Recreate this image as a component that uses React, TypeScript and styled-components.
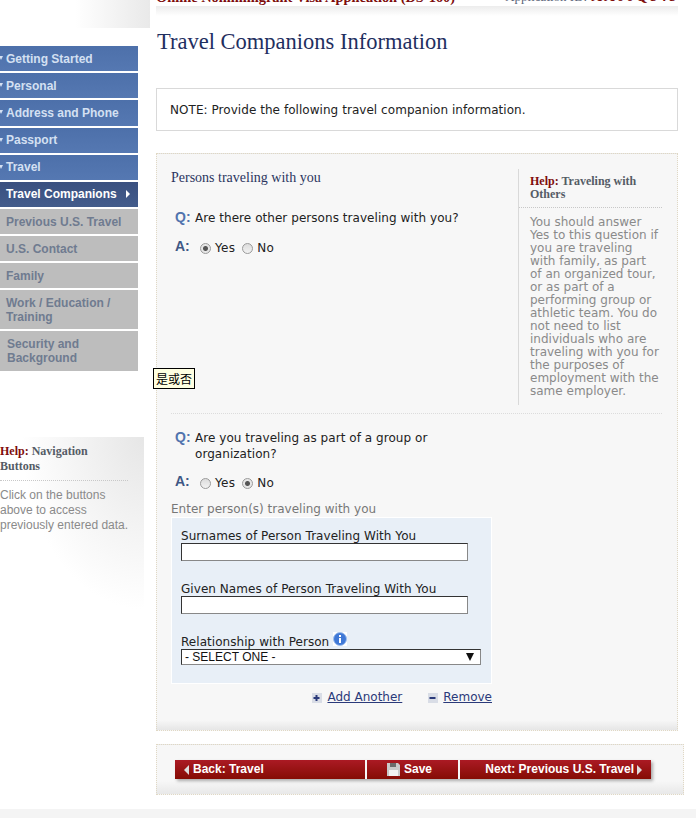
import React from "react";
import styled, { createGlobalStyle } from "styled-components";

const serif = '"Liberation Serif", "Times New Roman", serif';
const arial = '"Liberation Sans", Arial, sans-serif';
const verdana = '"DejaVu Sans", Verdana, sans-serif';

const GlobalStyle = createGlobalStyle`
  html, body {
    margin: 0;
    padding: 0;
    background: #fff;
    overflow: hidden;
  }
`;

const Page = styled.div`
  position: relative;
  width: 696px;
  height: 818px;
  overflow: hidden;
  display: flex;
  flex-direction: column;
`;

const Columns = styled.div`
  display: flex;
  height: 809px;
`;

const Sidebar = styled.div`
  width: 156px;
  flex: none;
`;

const TopFade = styled.div`
  width: 150px;
  height: 28px;
  background: linear-gradient(90deg, #fff 50%, #e9e9e9 100%);
`;

const NavList = styled.ul`
  list-style: none;
  margin: 18px 0 0;
  padding: 0;
  width: 138px;
`;

const NavItem = styled.li<{ $state: "done" | "active" | "todo"; $top: number; $bottom: number; $indent: number }>`
  position: relative;
  margin-bottom: 2px;
  padding: ${(p) => p.$top}px 6px ${(p) => p.$bottom}px ${(p) => p.$indent}px;
  font: bold 12px/14px ${arial};
  color: ${(p) => (p.$state === "todo" ? "#6f7b90" : p.$state === "active" ? "#fff" : "#d4e0f2")};
  background: ${(p) =>
    p.$state === "todo"
      ? "#bdbdbd"
      : p.$state === "active"
      ? "linear-gradient(180deg, #3a5080, #435c8b)"
      : "linear-gradient(180deg, #4d70aa, #5578b2)"};
`;

const Bullet = styled.span`
  position: absolute;
  left: -1px;
  top: 10px;
  width: 0;
  height: 0;
  border-left: 2px solid transparent;
  border-right: 2px solid transparent;
  border-top: 4px solid #d4e0f2;
`;

const ActiveArrow = styled.span`
  position: absolute;
  right: 8px;
  top: 8px;
  width: 0;
  height: 0;
  border-top: 4px solid transparent;
  border-bottom: 4px solid transparent;
  border-left: 4px solid #fff;
`;

const SideHelp = styled.div`
  width: 128px;
  height: 196px;
  margin-top: 66px;
  padding: 7px 16px 0 0;
  background: radial-gradient(ellipse 100% 100% at 100% 0, #e6e6e6 0%, #fff 85%);
`;

const HelpTitle = styled.div`
  font: bold 12px/15px ${serif};
  color: #555c66;
  padding-bottom: 6px;
  border-bottom: 1px dotted #c8c8c8;
`;

const HelpMark = styled.span`
  color: #7d0c0c;
`;

const SideHelpBody = styled.div`
  margin: 7px -6px 0 0;
  font: 12px/15px ${arial};
  color: #8a8a8a;
`;

const Main = styled.div`
  width: 528px;
  flex: none;
`;

const MastClip = styled.div`
  box-sizing: border-box;
  width: 522px;
  height: 6px;
  padding-bottom: 1px;
  overflow: hidden;
  display: flex;
  align-items: flex-end;
  justify-content: space-between;
`;

const MastLeft = styled.span`
  flex: none;
  font: bold 14.4px/16px ${serif};
  color: #7d0c0c;
`;

const MastRight = styled.span`
  flex: none;
  font: 13px/16px ${serif};
  color: #5a6478;
`;

const MastId = styled.span`
  margin-left: 4px;
  font: bold 15px/16px ${serif};
  letter-spacing: 2px;
  color: #7d0c0c;
`;

const MastFade = styled.div`
  width: 522px;
  height: 10px;
  background: linear-gradient(180deg, #ececec 0%, #fff 100%);
`;

const Title = styled.h1`
  margin: 13px 0 0 1px;
  height: 26px;
  font: normal 22.5px/26px ${serif};
  color: #1f2f5f;
`;

const Note = styled.div`
  box-sizing: border-box;
  width: 522px;
  height: 43px;
  margin-top: 33px;
  padding: 13px;
  border: 1px solid #d9d9d9;
  font: 12px/16px ${verdana};
  letter-spacing: 0.05px;
  color: #222;
`;

const Panel = styled.div`
  box-sizing: border-box;
  width: 522px;
  height: 578px;
  margin-top: 22px;
  padding: 15px 15px 0 14px;
  background: linear-gradient(180deg, #f7f7f7 0, #f7f7f7 566px, #e6e6e6 100%);
  border: 1px dotted #e0d8c4;
`;

const TopRow = styled.div`
  display: flex;
  height: 244px;
  border-bottom: 1px dotted #dcdcdc;
`;

const Questions = styled.div`
  flex: 1;
`;

const SectionTitle = styled.div`
  font: 14px/18px ${serif};
  color: #2b3560;
`;

const QRow = styled.div<{ $top: number }>`
  display: flex;
  margin: ${(p) => p.$top}px 0 0 4px;
  width: 300px;
`;

const QLetter = styled.span<{ $answer?: boolean }>`
  flex: none;
  width: 20px;
  margin-top: ${(p) => (p.$answer ? -1 : 0)}px;
  font: bold 14px/15px ${arial};
  color: ${(p) => (p.$answer ? "#3f5785" : "#5174ae")};
`;

const QText = styled.span`
  font: 12px/16px ${verdana};
  letter-spacing: 0.05px;
  color: #222;
`;

const Radios = styled.span`
  display: flex;
  align-items: center;
  gap: 4px;
  margin-left: 5px;
  font: 12px/16px ${verdana};
  letter-spacing: 0.3px;
  color: #222;
`;

const Radio = styled.span<{ $on?: boolean }>`
  box-sizing: border-box;
  width: 11px;
  height: 11px;
  border-radius: 50%;
  border: 1px solid #9a9a9a;
  background: ${(p) =>
    p.$on
      ? "radial-gradient(circle, #555 0, #555 2px, #e6e6e6 3px)"
      : "linear-gradient(#dcdcdc, #f2f2f2)"};
`;

const RadioLabel = styled.span`
  margin-right: 3px;
`;

const Help = styled.aside`
  box-sizing: border-box;
  width: 144px;
  height: 236px;
  border-left: 1px solid #d9d9d9;
  font: 12px/13px ${verdana};
`;

const HelpHead = styled.div`
  padding: 6px 0 6px 11px;
  font: bold 12px/13px ${serif};
  color: #555c66;
  border-bottom: 1px dotted #c8c8c8;
`;

const HelpBody = styled.div`
  padding: 8px 3px 0 11px;
  color: #8a8a8a;
`;

const EnterLabel = styled.div`
  margin-top: 10px;
  font: 12px/16px ${verdana};
  color: #777;
`;

const FormBox = styled.div`
  box-sizing: border-box;
  width: 321px;
  height: 167px;
  padding: 11px 9px 0;
  background: #e8eff7;
  border: 1px solid #fff;
`;

const FieldLabel = styled.div<{ $top: number }>`
  display: flex;
  align-items: flex-start;
  margin-top: ${(p) => p.$top}px;
  font: 12px/15px ${verdana};
  letter-spacing: 0.05px;
  color: #222;
`;

const TextField = styled.div`
  box-sizing: border-box;
  width: 287px;
  height: 18px;
  margin: -1px 0 1px;
  background: #fff;
  border: 1px solid;
  border-color: #333 #888 #888 #333;
`;

const SelectField = styled.div`
  box-sizing: border-box;
  width: 300px;
  height: 16px;
  margin-top: -1px;
  padding: 0 4px 0 3px;
  display: flex;
  justify-content: space-between;
  align-items: center;
  background: #fff;
  border: 1px solid;
  border-color: #333 #888 #888 #333;
  font: 12px/14px ${arial};
  color: #111;
`;

const SelectArrow = styled.span`
  width: 0;
  height: 0;
  margin-right: 2px;
  border-left: 4px solid transparent;
  border-right: 4px solid transparent;
  border-top: 8px solid #111;
`;

const InfoIcon = styled.svg`
  margin: -3px 0 0 4px;
`;

const Actions = styled.div`
  width: 321px;
  display: flex;
  justify-content: flex-end;
  gap: 25px;
  margin-top: 5px;
`;

const ActionLink = styled.a`
  display: flex;
  align-items: center;
  gap: 5px;
  font: 12px/16px ${verdana};
  color: #2b3a7a;
  text-decoration: none;
`;

const LinkText = styled.span`
  text-decoration: underline;
`;

const ButtonPanel = styled.div`
  box-sizing: border-box;
  width: 528px;
  height: 51px;
  margin-top: 13px;
  padding: 15px 18px 0;
  background: linear-gradient(180deg, #f7f7f7 0, #f7f7f7 36px, #e8e8e8 100%);
  border: 1px dotted #e0d8c4;
`;

const ButtonBar = styled.div`
  display: flex;
  gap: 2px;
  width: 476px;
  box-shadow: 2px 2px 3px #aaa;
`;

const NavButton = styled.div<{ $width: number; $align: "left" | "center" | "right" }>`
  box-sizing: border-box;
  width: ${(p) => p.$width}px;
  height: 19px;
  padding: ${(p) => (p.$align === "left" ? "0 5px 0 9px" : p.$align === "center" ? "0 6px 0 0" : "0 9px 0 0")};
  display: flex;
  align-items: center;
  gap: ${(p) => (p.$align === "right" ? 3 : 4)}px;
  justify-content: ${(p) =>
    p.$align === "left" ? "flex-start" : p.$align === "center" ? "center" : "flex-end"};
  font: bold 12px/19px ${arial};
  color: #fff;
  background: linear-gradient(180deg, #ab1a24 0%, #850c04 100%);
`;

const Tri = styled.span<{ $left?: boolean }>`
  width: 0;
  height: 0;
  border-top: 5px solid transparent;
  border-bottom: 5px solid transparent;
  ${(p) => (p.$left ? "border-right: 5px solid #ddd;" : "border-left: 5px solid #ddd;")}
`;

const Tooltip = styled.div`
  position: absolute;
  left: 153px;
  top: 368px;
  box-sizing: border-box;
  height: 21px;
  padding: 0 2px;
  background: #ffffe1;
  border: 1px solid #000;
  font: 12px/19px "Noto Sans CJK SC", sans-serif;
  color: #000;
`;

const FooterBand = styled.div`
  height: 9px;
  background: #f4f4f4;
`;

type SideItem = {
  label: React.ReactNode;
  state: "done" | "active" | "todo";
  top?: number;
  bottom?: number;
  indent?: number;
};

const sideItems: SideItem[] = [
  { label: "Getting Started", state: "done" },
  { label: "Personal", state: "done" },
  { label: "Address and Phone", state: "done", bottom: 6 },
  { label: "Passport", state: "done", top: 5, bottom: 6 },
  { label: "Travel", state: "done", top: 5, bottom: 6 },
  { label: "Travel Companions", state: "active", top: 5, bottom: 6 },
  { label: "Previous U.S. Travel", state: "todo" },
  { label: "U.S. Contact", state: "todo" },
  { label: "Family", state: "todo" },
  { label: <>Work / Education /<br />Training</>, state: "todo" },
  { label: <>Security and<br />Background</>, state: "todo", bottom: 6, indent: 7 },
];

const YesNo = ({ yes }: { yes: boolean }) => (
  <Radios>
    <Radio $on={yes} />
    <RadioLabel>Yes</RadioLabel>
    <Radio $on={!yes} />
    <RadioLabel>No</RadioLabel>
  </Radios>
);

const SignIcon = ({ plus }: { plus?: boolean }) => (
  <svg width="11" height="11" viewBox="0 0 11 11">
    <rect x="1" y="1" width="10" height="10" fill="#d9dde6" />
    <rect x="2.5" y="5" width="6" height="2" fill="#2b3a7a" />
    {plus && <rect x="4.5" y="3" width="2" height="6" fill="#2b3a7a" />}
  </svg>
);

const SaveIcon = () => (
  <svg width="13" height="13" viewBox="0 0 13 13">
    <path d="M0 0h11l2 2v11H0z" fill="#c9c9c9" />
    <rect x="3" y="0" width="6" height="4" fill="#6b6b6b" />
    <rect x="2" y="7" width="9" height="6" fill="#f1f1f1" />
  </svg>
);

export default function App() {
  return (
    <Page>
      <GlobalStyle />
      <Columns>
        <Sidebar>
          <TopFade />
          <NavList>
            {sideItems.map((item, i) => (
              <NavItem
                key={i}
                $state={item.state}
                $top={item.top ?? 6}
                $bottom={item.bottom ?? 5}
                $indent={item.indent ?? 6}
              >
                {item.state === "done" && <Bullet />}
                {item.label}
                {item.state === "active" && <ActiveArrow />}
              </NavItem>
            ))}
          </NavList>
          <SideHelp>
            <HelpTitle>
              <HelpMark>Help:</HelpMark> Navigation Buttons
            </HelpTitle>
            <SideHelpBody>Click on the buttons above to access previously entered data.</SideHelpBody>
          </SideHelp>
        </Sidebar>
        <Main>
          <MastClip>
            <MastLeft>Online Nonimmigrant Visa Application (DS-160)</MastLeft>
            <MastRight>
              Application ID:
              <MastId>AA00Q848</MastId>
            </MastRight>
          </MastClip>
          <MastFade />
          <Title>Travel Companions Information</Title>
          <Note>NOTE: Provide the following travel companion information.</Note>
          <Panel>
            <TopRow>
              <Questions>
                <SectionTitle>Persons traveling with you</SectionTitle>
                <QRow $top={23}>
                  <QLetter>Q:</QLetter>
                  <QText>Are there other persons traveling with you?</QText>
                </QRow>
                <QRow $top={14}>
                  <QLetter $answer>A:</QLetter>
                  <YesNo yes />
                </QRow>
              </Questions>
              <Help>
                <HelpHead>
                  <HelpMark>Help:</HelpMark> Traveling with Others
                </HelpHead>
                <HelpBody>
                  You should answer Yes to this question if you are traveling with family, as part of an organized tour,
                  or as part of a performing group or athletic team. You do not need to list individuals who are
                  traveling with you for the purposes of employment with the same employer.
                </HelpBody>
              </Help>
            </TopRow>
            <QRow $top={16}>
              <QLetter>Q:</QLetter>
              <QText>Are you traveling as part of a group or organization?</QText>
            </QRow>
            <QRow $top={13}>
              <QLetter $answer>A:</QLetter>
              <YesNo yes={false} />
            </QRow>
            <EnterLabel>Enter person(s) traveling with you</EnterLabel>
            <FormBox>
              <FieldLabel $top={0}>Surnames of Person Traveling With You</FieldLabel>
              <TextField />
              <FieldLabel $top={21}>Given Names of Person Traveling With You</FieldLabel>
              <TextField />
              <FieldLabel $top={21}>
                Relationship with Person
                <InfoIcon width="14" height="14" viewBox="0 0 14 14">
                  <rect width="14" height="14" fill="#fff" />
                  <circle cx="7" cy="7" r="6.5" fill="#3f78d6" stroke="#9dbdec" />
                  <rect x="6" y="6" width="2" height="5" fill="#fff" />
                  <rect x="6" y="3" width="2" height="2" fill="#fff" />
                </InfoIcon>
              </FieldLabel>
              <SelectField>
                - SELECT ONE -
                <SelectArrow />
              </SelectField>
            </FormBox>
            <Actions>
              <ActionLink>
                <SignIcon plus />
                <LinkText>Add Another</LinkText>
              </ActionLink>
              <ActionLink>
                <SignIcon />
                <LinkText>Remove</LinkText>
              </ActionLink>
            </Actions>
          </Panel>
          <ButtonPanel>
            <ButtonBar>
              <NavButton $width={190} $align="left">
                <Tri $left />
                Back: Travel
              </NavButton>
              <NavButton $width={91} $align="center">
                <SaveIcon />
                Save
              </NavButton>
              <NavButton $width={191} $align="right">
                Next: Previous U.S. Travel
                <Tri />
              </NavButton>
            </ButtonBar>
          </ButtonPanel>
        </Main>
      </Columns>
      <FooterBand />
      <Tooltip>是或否</Tooltip>
    </Page>
  );
}
